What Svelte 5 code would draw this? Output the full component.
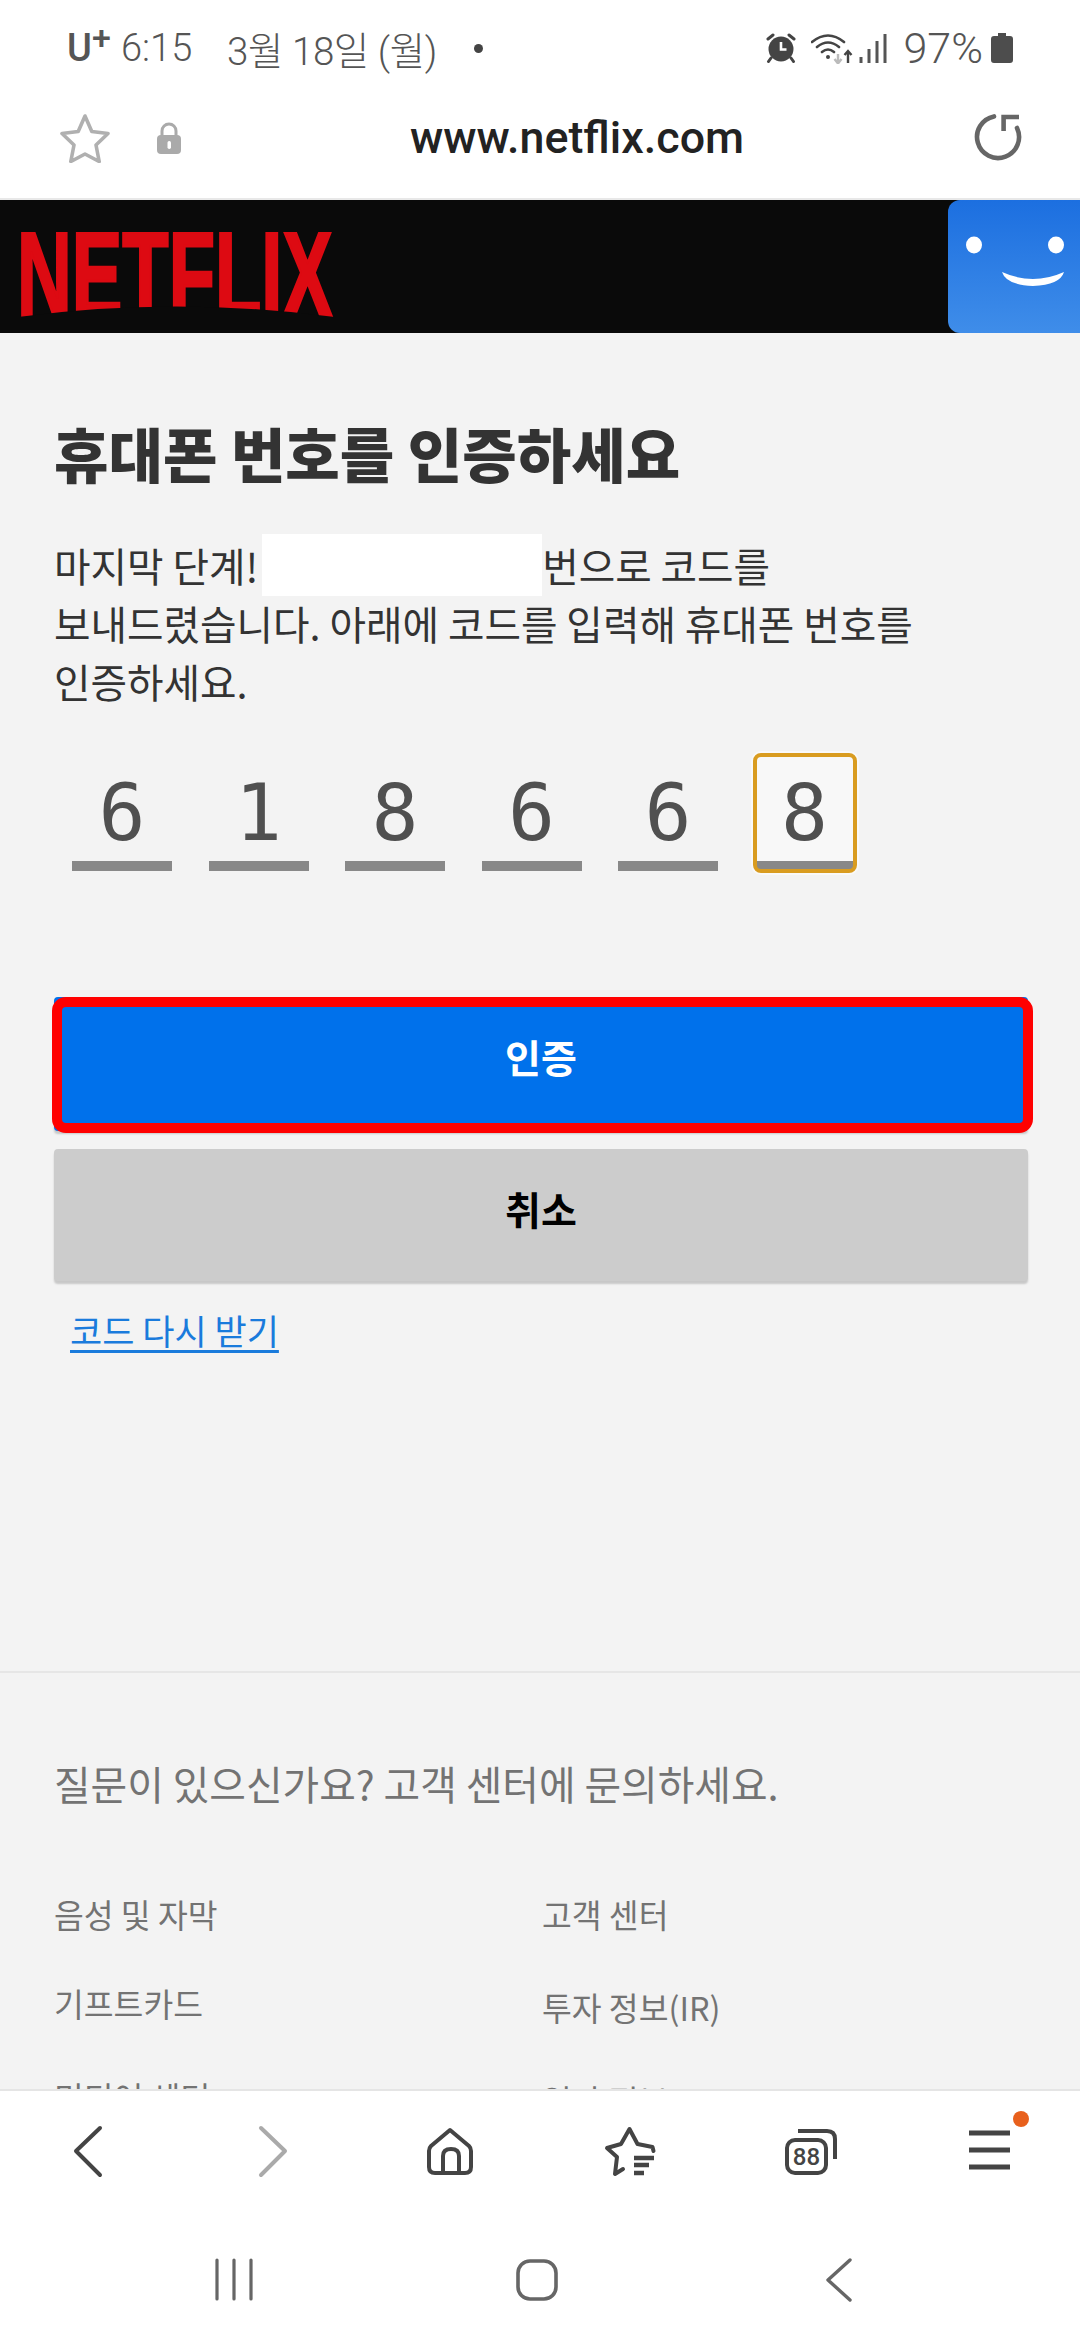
<script>
  const digits = ['6', '1', '8', '6', '6', '8'];
  const leftLinks = ['기프트카드', '미디어 센터'];
  const rightLinks = ['투자 정보(IR)', '입사 정보'];
</script>

<div class="screen">
  <header class="status">
    <div class="status-left">
      <span class="carrier">U<sup>+</sup></span>
      <span class="time">6:15</span>
      <span class="date">3월 18일 (월)</span>
      <span class="dot"></span>
    </div>
    <div class="status-right">
      <svg class="alarm" width="30" height="30" viewBox="0 0 30 30">
        <circle cx="15" cy="16" r="12.5" fill="#444" />
        <path d="M15 9v7.5h5.5" fill="none" stroke="#fff" stroke-width="2.6" />
        <path d="M2 6l5-4M28 6l-5-4M5 25l-2.5 3.5M25 25l2.5 3.5" stroke="#444" stroke-width="3" stroke-linecap="round" fill="none" />
      </svg>
      <svg class="wifi" width="42" height="31" viewBox="0 0 42 31">
        <path d="M1 9Q17-4 33 9M6 14Q17 5 28 14M11 19Q17 14 23 19" fill="none" stroke="#444" stroke-width="2.6" stroke-linecap="round" />
        <circle cx="17" cy="24" r="2" fill="#444" />
        <path d="M27 21v10M23.500 26l3.500 4.500 3.500-4.500" fill="none" stroke="#bbb" stroke-width="2.400" />
        <path d="M37 30V18M33.500 22l3.500-4 3.500 4" fill="none" stroke="#444" stroke-width="2.400" />
      </svg>
      <svg class="signal" width="28" height="30" viewBox="0 0 28 30">
        <path d="M2 30v-6M10 30V16M18 30V8M26 30V1" stroke="#555" stroke-width="3" fill="none" />
      </svg>
      <span class="battery-text">97%</span>
      <svg class="battery" width="22" height="30" viewBox="0 0 22 30">
        <path d="M7 0h8v3h4q3 0 3 3v21q0 3-3 3H3q-3 0-3-3V6q0-3 3-3h4z" fill="#4d4d4d" />
      </svg>
    </div>
  </header>

  <div class="urlbar">
    <svg class="star" width="50" height="50" viewBox="0 0 50 50">
      <path d="M25 3l6.800 15.500 16.200 2-12 11.500 3.200 16.500L25 41l-14.200 7.500L14 32 2 20.500l16.200-2z" fill="none" stroke="#b0b0b0" stroke-width="3.600" stroke-linejoin="round" />
    </svg>
    <svg class="lock" width="24" height="32" viewBox="0 0 24 32">
      <path d="M5 15V9a7 7 0 0 1 14 0v6" fill="none" stroke="#aaa" stroke-width="3" />
      <rect x="0" y="13" width="24" height="19" rx="4" fill="#aaa" />
      <rect x="10.500" y="19" width="3.500" height="8" rx="1.700" fill="#fff" />
    </svg>
    <span class="url">www.netflix.com</span>
    <svg class="reload" width="50" height="50" viewBox="0 0 50 50">
      <path d="M21 3.400A21 21 0 1 0 44 15" fill="none" stroke="#666" stroke-width="4.600" stroke-linecap="round" />
      <path d="M46 4H30.600V18" fill="none" stroke="#666" stroke-width="4.600" />
    </svg>
  </div>

  <div class="brand">
    <svg class="logo" width="320" height="90" viewBox="0 0 320 90">
      <text transform="translate(-3 85) scale(0.6166 1)" class="logo-text">NETFLIX</text>
      <path d="M-2 90V85Q155 64 315 85V90z" fill="#0a0a0a" />
    </svg>
    <div class="avatar">
      <svg width="132" height="133" viewBox="0 0 132 133">
        <ellipse cx="26" cy="45" rx="8" ry="8.500" fill="#fff" />
        <ellipse cx="108" cy="45" rx="8" ry="8.500" fill="#fff" />
        <path d="M54 72Q85 86 116 72Q112 85 85 86Q58 85 54 72z" fill="#fff" />
      </svg>
    </div>
  </div>

  <main class="page">
    <section class="content">
      <h1>휴대폰 번호를 인증하세요</h1>
      <p class="copy">마지막 단계! <span class="redacted"></span>번으로 코드를<br />보내드렸습니다. 아래에 코드를 입력해 휴대폰 번호를<br />인증하세요.</p>
      <div class="otp">
        {#each digits as d, i}
          <div class="cell" class:focused={i === digits.length - 1}>{d}</div>
        {/each}
      </div>
      <button class="btn primary"><span class="label">인증</span><span class="highlight"></span></button>
      <button class="btn secondary"><span class="label">취소</span></button>
      <a class="resend" href="#resend">코드 다시 받기</a>
    </section>
    <footer class="foot">
      <p class="ask">질문이 있으신가요? 고객 센터에 문의하세요.</p>
      <div class="cols">
        <ul class="col col-left">
          <li>음성 및 자막</li>
          {#each leftLinks as l}<li>{l}</li>{/each}
        </ul>
        <ul class="col col-right">
          <li>고객 센터</li>
          {#each rightLinks as l}<li>{l}</li>{/each}
        </ul>
      </div>
    </footer>
  </main>

  <nav class="toolbar">
    <svg viewBox="0 0 60 60" width="60" height="60"><path d="M40 7L16 30l24 24" fill="none" stroke="#444" stroke-width="4" stroke-linecap="round" stroke-linejoin="round" /></svg>
    <svg viewBox="0 0 60 60" width="60" height="60"><path d="M21 7l24 23-24 24" fill="none" stroke="#aaa" stroke-width="4" stroke-linecap="round" stroke-linejoin="round" /></svg>
    <svg viewBox="0 0 60 60" width="60" height="60">
      <path d="M30 9L11 25q-2 2-2 5v16q0 6 6 6h30q6 0 6-6V30q0-3-2-5z" fill="none" stroke="#444" stroke-width="4" stroke-linejoin="round" />
      <path d="M23 51V35q0-7 8-7t8 7v16" fill="none" stroke="#444" stroke-width="4" />
    </svg>
    <svg viewBox="0 0 60 60" width="60" height="60">
      <path d="M23 48l-8 5 2-17L7 27l14-4 8.500-15 8 15 15 3 1 4" fill="none" stroke="#444" stroke-width="4" stroke-linecap="round" stroke-linejoin="round" />
      <path d="M34 37h20M34 44h15M34 52h10" stroke="#444" stroke-width="4.500" fill="none" />
    </svg>
    <svg viewBox="0 0 60 60" width="60" height="60">
      <rect x="7" y="19" width="39" height="33" rx="8" fill="none" stroke="#444" stroke-width="4" />
      <path d="M18 10h29q8 0 8 8v20" fill="none" stroke="#444" stroke-width="4" />
      <text x="26.500" y="44" text-anchor="middle" class="tabcount">88</text>
    </svg>
    <svg viewBox="0 0 60 60" width="60" height="60" class="menu">
      <path d="M9 12h41M9 29h41M9 46h41" stroke="#444" stroke-width="5" fill="none" />
      <circle cx="61" cy="-2" r="8" fill="#e8601c" />
    </svg>
  </nav>

  <nav class="system">
    <svg viewBox="0 0 60 60" width="60" height="60"><path d="M13 10v39M30 10v39M47 10v39" stroke="#666" stroke-width="3.200" stroke-linecap="round" fill="none" /></svg>
    <svg viewBox="0 0 60 60" width="60" height="60"><rect x="11" y="11" width="38" height="38" rx="12" fill="none" stroke="#666" stroke-width="3.600" /></svg>
    <svg viewBox="0 0 60 60" width="60" height="60"><path d="M40 10L18 30l22 20" fill="none" stroke="#666" stroke-width="3.400" stroke-linecap="round" stroke-linejoin="round" /></svg>
  </nav>
</div>

<style>
  :global(body) {
    margin: 0;
    background: #f3f3f3;
  }
  .screen {
    width: 1080px;
    height: 2340px;
    display: flex;
    flex-direction: column;
    overflow: hidden;
    font-family: "Noto Sans CJK KR", sans-serif;
    background: #f3f3f3;
  }
  .status {
    height: 96px;
    flex: none;
    background: #fff;
    display: flex;
    align-items: center;
    justify-content: space-between;
    padding: 0 67px;
    color: #555;
    font-family: Roboto, "Noto Sans CJK KR", sans-serif;
    font-size: 38px;
  }
  .status-left, .status-right {
    display: flex;
    align-items: center;
  }
  .carrier {
    font-weight: 500;
    width: 54px;
    font-size: 38px;
    line-height: 1;
  }
  .carrier sup {
    font-size: 34px;
    line-height: 0;
    vertical-align: 12px;
    margin-left: 0;
  }
  .time { width: 106px; font-weight: 300; }
  .date { font-size: 38.500px; font-weight: 300; width: 247px; letter-spacing: -0.4px; white-space: nowrap; }
  .dot {
    width: 9px;
    height: 9px;
    border-radius: 50%;
    background: #444;
  }
  .alarm { margin-right: 15px; }
  .wifi { margin-right: 6px; }
  .signal { margin-right: 17px; }
  .battery-text { font-size: 43px; font-weight: 300; margin-right: 8px; }

  .urlbar {
    height: 104px;
    flex: none;
    background: #fff;
    border-bottom: 2px solid #e8e8e8;
    box-sizing: border-box;
    display: flex;
    align-items: flex-start;
    padding-top: 17px;
  }
  .star { margin-left: 60px; }
  .lock { margin: 9px 0 0 47px; }
  .url {
    margin-left: 229px;
    width: 333px;
    font-family: Roboto, sans-serif;
    font-weight: 500;
    font-size: 44.800px;
    line-height: 50px;
    color: #222;
    white-space: nowrap;
  }
  .reload { margin-left: 230px; }

  .brand {
    height: 133px;
    flex: none;
    background: #0a0a0a;
    display: flex;
    justify-content: space-between;
    align-items: flex-start;
  }
  .logo { margin: 32px 0 0 20px; }
  .logo-text {
    font-family: "Liberation Sans", sans-serif;
    font-weight: 700;
    font-size: 123px;
    fill: #dd0a12;
    stroke: #dd0a12;
    stroke-width: 3px;
  }
  .avatar {
    width: 132px;
    height: 133px;
    border-radius: 12px 0 0 12px;
    background: linear-gradient(#1c6fe0, #3f8de9);
  }
  .avatar svg { display: block; }

  .page {
    flex: 1;
    min-height: 0;
    overflow: hidden;
  }
  .content {
    padding: 86px 52px 0 54px;
    height: 1340px;
    box-sizing: border-box;
    display: flex;
    flex-direction: column;
    align-items: flex-start;
    border-bottom: 2px solid #e6e6e6;
  }
  h1 {
    margin: 0;
    font-size: 59.200px;
    line-height: 66px;
    font-weight: 900;
    color: #333;
    white-space: nowrap;
  }
  .copy {
    margin: 51px 0 0;
    font-size: 39.700px;
    line-height: 58px;
    color: #333;
    white-space: nowrap;
  }
  .redacted {
    display: inline-block;
    width: 280px;
    height: 62px;
    margin: -16px 0 -4px -5px;
    background: #fff;
    vertical-align: middle;
  }
  .otp {
    display: flex;
    gap: 36.5px;
    margin: 45px 0 0 18px;
  }
  .cell {
    width: 100px;
    height: 116px;
    box-sizing: border-box;
    border-bottom: 10px solid #888;
    text-align: center;
    font-family: "DejaVu Sans Mono", monospace;
    font-size: 78px;
    line-height: 116px;
    color: #505050;
  }
  .focused {
    background: #f8f8f8;
    outline: 4.500px solid #d99c20;
    outline-offset: -2px;
    border-radius: 6px;
    box-shadow: 0 0 0 4px rgba(255, 255, 255, 0.5);
  }
  .btn {
    flex: none;
    width: 974px;
    border: 0;
    border-radius: 4px;
    font-family: inherit;
    font-size: 39px;
    font-weight: 700;
    box-shadow: 0 3px 2px rgba(0, 0, 0, 0.18);
    position: relative;
  }
  .primary {
    height: 134px;
    padding: 0 0 16px;
    margin-top: 126px;
    background: #0071eb;
    color: #fff;
  }
  .highlight {
    position: absolute;
    left: -2px;
    right: -5px;
    top: 0;
    bottom: -2px;
    border: 10px solid #f00;
    border-radius: 14px;
  }
  .secondary {
    height: 132px;
    padding: 0 0 14px;
    margin-top: 18px;
    background: #ccc;
    color: #000;
  }
  .resend {
    margin: 25px 0 0 16px;
    font-size: 35px;
    line-height: 48px;
    color: #1a7bdc;
    text-decoration: underline;
    text-underline-offset: 5px;
  }
  .foot {
    padding: 83px 0 0 54px;
    color: #737373;
  }
  .ask {
    margin: 0;
    font-size: 39.800px;
    line-height: 54px;
    white-space: nowrap;
  }
  .cols {
    display: flex;
    margin-top: 81px;
  }
  .col {
    list-style: none;
    margin: 0;
    padding: 0;
    width: 488px;
    display: flex;
    flex-direction: column;
    font-size: 32.400px;
    line-height: 46px;
  }
  .col-left { gap: 43px; }
  .col-left li:last-child { margin-top: 5px; }
  .col-right { gap: 47px; }
  .toolbar {
    height: 120px;
    flex: none;
    background: #fff;
    border-top: 2px solid #e5e5e5;
    display: grid;
    grid-template-columns: repeat(6, 180px);
    justify-items: center;
    align-items: center;
  }
  .menu { overflow: visible; }
  .tabcount {
    font-family: Roboto, sans-serif;
    font-size: 24px;
    font-weight: 500;
    fill: #444;
  }
  .system {
    height: 129px;
    flex: none;
    background: #fff;
    display: grid;
    grid-template-columns: repeat(3, 303px);
    justify-items: center;
    align-items: start;
    padding: 39px 0 0 82px;
    box-sizing: border-box;
  }
</style>
